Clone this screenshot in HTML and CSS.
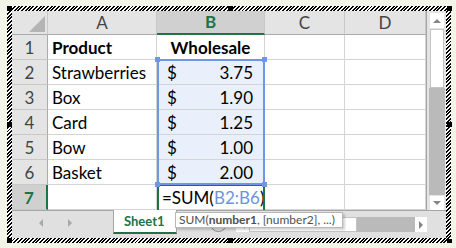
FILE: index.html
```html
<!DOCTYPE html>
<html>
<head>
<meta charset="utf-8">
<link rel="stylesheet" href="styles.css">
</head>
<body>
<div class="frame">
  <div class="inner">
    <div class="main">
      <div class="sheet">
        <div class="c h ch corner"><svg width="16" height="16" viewBox="0 0 16 16"><polygon points="16,0 16,16 0,16" fill="#b4b4b4"/></svg></div>
        <div class="c h ch">A</div>
        <div class="c h ch hsel">B</div>
        <div class="c h ch">C</div>
        <div class="c h ch">D</div>

        <div class="c h rh">1</div>
        <div class="c b">Product</div>
        <div class="c b center">Wholesale</div>
        <div class="c"></div>
        <div class="c"></div>

        <div class="c h rh">2</div>
        <div class="c">Strawberries</div>
        <div class="c sel acc"><span>$</span><span>3.75</span></div>
        <div class="c"></div>
        <div class="c"></div>

        <div class="c h rh">3</div>
        <div class="c">Box</div>
        <div class="c sel acc"><span>$</span><span>1.90</span></div>
        <div class="c"></div>
        <div class="c"></div>

        <div class="c h rh">4</div>
        <div class="c">Card</div>
        <div class="c sel acc"><span>$</span><span>1.25</span></div>
        <div class="c"></div>
        <div class="c"></div>

        <div class="c h rh">5</div>
        <div class="c">Bow</div>
        <div class="c sel acc"><span>$</span><span>1.00</span></div>
        <div class="c"></div>
        <div class="c"></div>

        <div class="c h rh">6</div>
        <div class="c">Basket</div>
        <div class="c sel acc"><span>$</span><span>2.00</span></div>
        <div class="c"></div>
        <div class="c"></div>

        <div class="c h rh hsel">7</div>
        <div class="c"></div>
        <div class="c formula">=SUM(<span class="ref">B2:B6</span>)</div>
        <div class="c"></div>
        <div class="c"></div>

        <div class="active"></div>
        <div class="range">
          <i class="hd tl"></i><i class="hd tr"></i><i class="hd bl"></i><i class="hd br"></i>
        </div>
      </div>
      <div class="vscroll">
        <div class="sbtn up"></div>
        <div class="vthumb"></div>
        <div class="vtrack"></div>
        <div class="sbtn down"></div>
      </div>
    </div>
    <div class="tabbar">
      <div class="nav"><i class="tri-l"></i><i class="tri-r"></i></div>
      <div class="tab">Sheet1</div>
      <div class="newsheet"><i class="plus"></i></div>
      <div class="hscroll">
        <div class="hbtn left"></div>
        <div class="hthumb"></div>
        <div class="htrack"></div>
        <div class="hbtn right"></div>
      </div>
      <div class="tcorner"></div>
    </div>
  </div>
  <i class="grip g-tl"></i><i class="grip g-tc"></i><i class="grip g-tr"></i>
  <i class="grip g-ml"></i><i class="grip g-mr"></i>
  <i class="grip g-bl"></i><i class="grip g-bc"></i><i class="grip g-br"></i>
  <div class="tooltip">SUM(<b>number1</b>, [number2], ...)</div>
</div>
</body>
</html>
```
FILE: styles.css
```css
* { box-sizing: border-box; }
body {
  margin: 0;
  background: #f2f4e7;
  font-family: Lato, "Liberation Sans", sans-serif;
}
.frame {
  position: relative;
  margin: 6px 0 0 7px;
  width: 444px;
  height: 237px;
  padding: 5px;
  background: repeating-linear-gradient(135deg, #000 0 1.4px, #fff 1.4px 2.6px);
}
.inner {
  width: 100%;
  height: 100%;
  background: #fff;
  display: flex;
  flex-direction: column;
}
.main { display: flex; height: 199px; }
.sheet {
  position: relative;
  display: grid;
  grid-template-columns: 36px 109px 108px 80px 81px;
  grid-template-rows: 24px repeat(7, 25px);
  width: 414px;
}
.c {
  border-right: 1px solid #d4d4d4;
  border-bottom: 1px solid #d4d4d4;
  display: flex;
  align-items: flex-end;
  padding: 0 4px 1px;
  font-size: 17px;
  line-height: 20px;
  white-space: nowrap;
  color: #000;
}
.h { background: #e4e4e4; color: #444; justify-content: center; }
.ch { border-bottom-color: #ababab; border-right-color: #c8c8c8; align-items: center; padding: 0; }
.rh { border-right-color: #ababab; border-bottom-color: #c8c8c8; padding: 0 0 1px; }
.corner { justify-content: flex-end; align-items: flex-end; padding: 0 2px 2px 0; }
.corner svg { display: block; }
.hsel { background: #d0d0d0; color: #217346; font-weight: bold; }
.ch.hsel { border-bottom: 2px solid #217346; }
.rh.hsel { border-right: 2px solid #217346; }
.b { font-weight: bold; }
.center { justify-content: center; }
.sel { background: #eaf0fb; }
.acc { justify-content: space-between; padding: 0 11px 1px 10px; }
.formula { padding-left: 5px; overflow: visible; }
.ref { color: #6f92e0; }

.range {
  position: absolute;
  grid-column: 3 / 4;
  grid-row: 3 / 8;
  top: -1px; left: 0; right: 0; bottom: 0;
  border: 2px solid #7194e4;
}
.active {
  position: absolute;
  grid-column: 3 / 4;
  grid-row: 8 / 9;
  top: -1px; left: 0; right: 0; bottom: 0;
  border: 2px solid #217346;
  border-bottom: none;
}
.hd {
  position: absolute;
  width: 5px;
  height: 5px;
  background: #7194e4;
}
.hd.tl { left: -4px; top: -4px; }
.hd.tr { right: -4px; top: -4px; }
.hd.bl { left: -4px; bottom: -4px; }
.hd.br { right: -4px; bottom: -4px; }

.vscroll {
  width: 20px;
  border-left: 1px solid #a6a6a6;
  background: #e4e4e4;
  display: flex;
  flex-direction: column;
  padding-top: 2px;
}
.sbtn {
  width: 14px;
  height: 15px;
  margin-left: 3px;
  background: #fff;
  display: flex;
  align-items: center;
  justify-content: center;
}
.sbtn.up::after {
  content: "";
  border-left: 4px solid transparent;
  border-right: 4px solid transparent;
  border-bottom: 4px solid #868686;
}
.sbtn.down { height: 14px; margin-top: 1px; }
.sbtn.down::after {
  content: "";
  border-left: 4px solid transparent;
  border-right: 4px solid transparent;
  border-top: 4px solid #868686;
}
.vthumb {
  width: 14px;
  height: 59px;
  margin: 1px 0 0 3px;
  background: #fff;
  border: 1px solid #c4c4c4;
}
.vtrack {
  flex: 1;
  margin: 0 1px 0 2px;
  background: #bababa;
}

.tabbar {
  display: flex;
  height: 28px;
  background: #e0e0e0;
  border-top: 1px solid #a6a6a6;
}
.nav {
  width: 101px;
  display: flex;
  align-items: flex-start;
  padding: 8px 0 0 27px;
  gap: 25px;
}
.tri-l {
  border-top: 4px solid transparent;
  border-bottom: 4px solid transparent;
  border-right: 4px solid #a8a8a8;
}
.tri-r {
  border-top: 4px solid transparent;
  border-bottom: 4px solid transparent;
  border-left: 4px solid #a8a8a8;
}
.tab {
  width: 64px;
  height: 24px;
  margin-top: -1px;
  background: #fff;
  border-left: 1px solid #a6a6a6;
  border-right: 1px solid #a6a6a6;
  border-bottom: 2px solid #217346;
  color: #217346;
  font-weight: bold;
  font-size: 13px;
  display: flex;
  align-items: center;
  padding-left: 10px;
}
.newsheet { width: 59px; position: relative; }
.plus {
  position: absolute;
  left: 33px;
  top: 4px;
  width: 17px;
  height: 17px;
  border-radius: 50%;
  border: 1.5px solid #8a8a8a;
}
.hscroll {
  width: 191px;
  height: 15px;
  margin-top: 6px;
  display: flex;
}
.hbtn {
  width: 13px;
  background: #fff;
  display: flex;
  align-items: center;
  justify-content: center;
}
.hbtn.right { width: 12px; }
.hbtn.left::after {
  content: "";
  border-top: 4px solid transparent;
  border-bottom: 4px solid transparent;
  border-right: 4px solid #868686;
}
.hbtn.right::after {
  content: "";
  border-top: 4px solid transparent;
  border-bottom: 4px solid transparent;
  border-left: 4px solid #868686;
}
.hthumb {
  width: 108px;
  background: #fff;
  border: 1px solid #c4c4c4;
}
.htrack { flex: 1; background: #bababa; }
.tcorner { width: 19px; }

.grip {
  position: absolute;
  width: 5px;
  height: 5px;
  background: #000;
}
.g-tl { left: 0; top: 0; }
.g-tc { left: 221px; top: 0; }
.g-tr { right: -1px; top: 0; }
.g-ml { left: 0; top: 116px; }
.g-mr { right: -1px; top: 116px; }
.g-bl { left: 0; bottom: 0; }
.g-bc { left: 221px; bottom: 0; }
.g-br { right: -1px; bottom: -1px; }

.tooltip {
  position: absolute;
  left: 168px;
  top: 206px;
  width: 168px;
  height: 16px;
  padding: 0 3px;
  background: #fff;
  border: 1px solid #b8b8b8;
  box-shadow: 2px 2px 2px rgba(0, 0, 0, 0.18);
  font-size: 12px;
  line-height: 14px;
  color: #505050;
  white-space: nowrap;
}
```
